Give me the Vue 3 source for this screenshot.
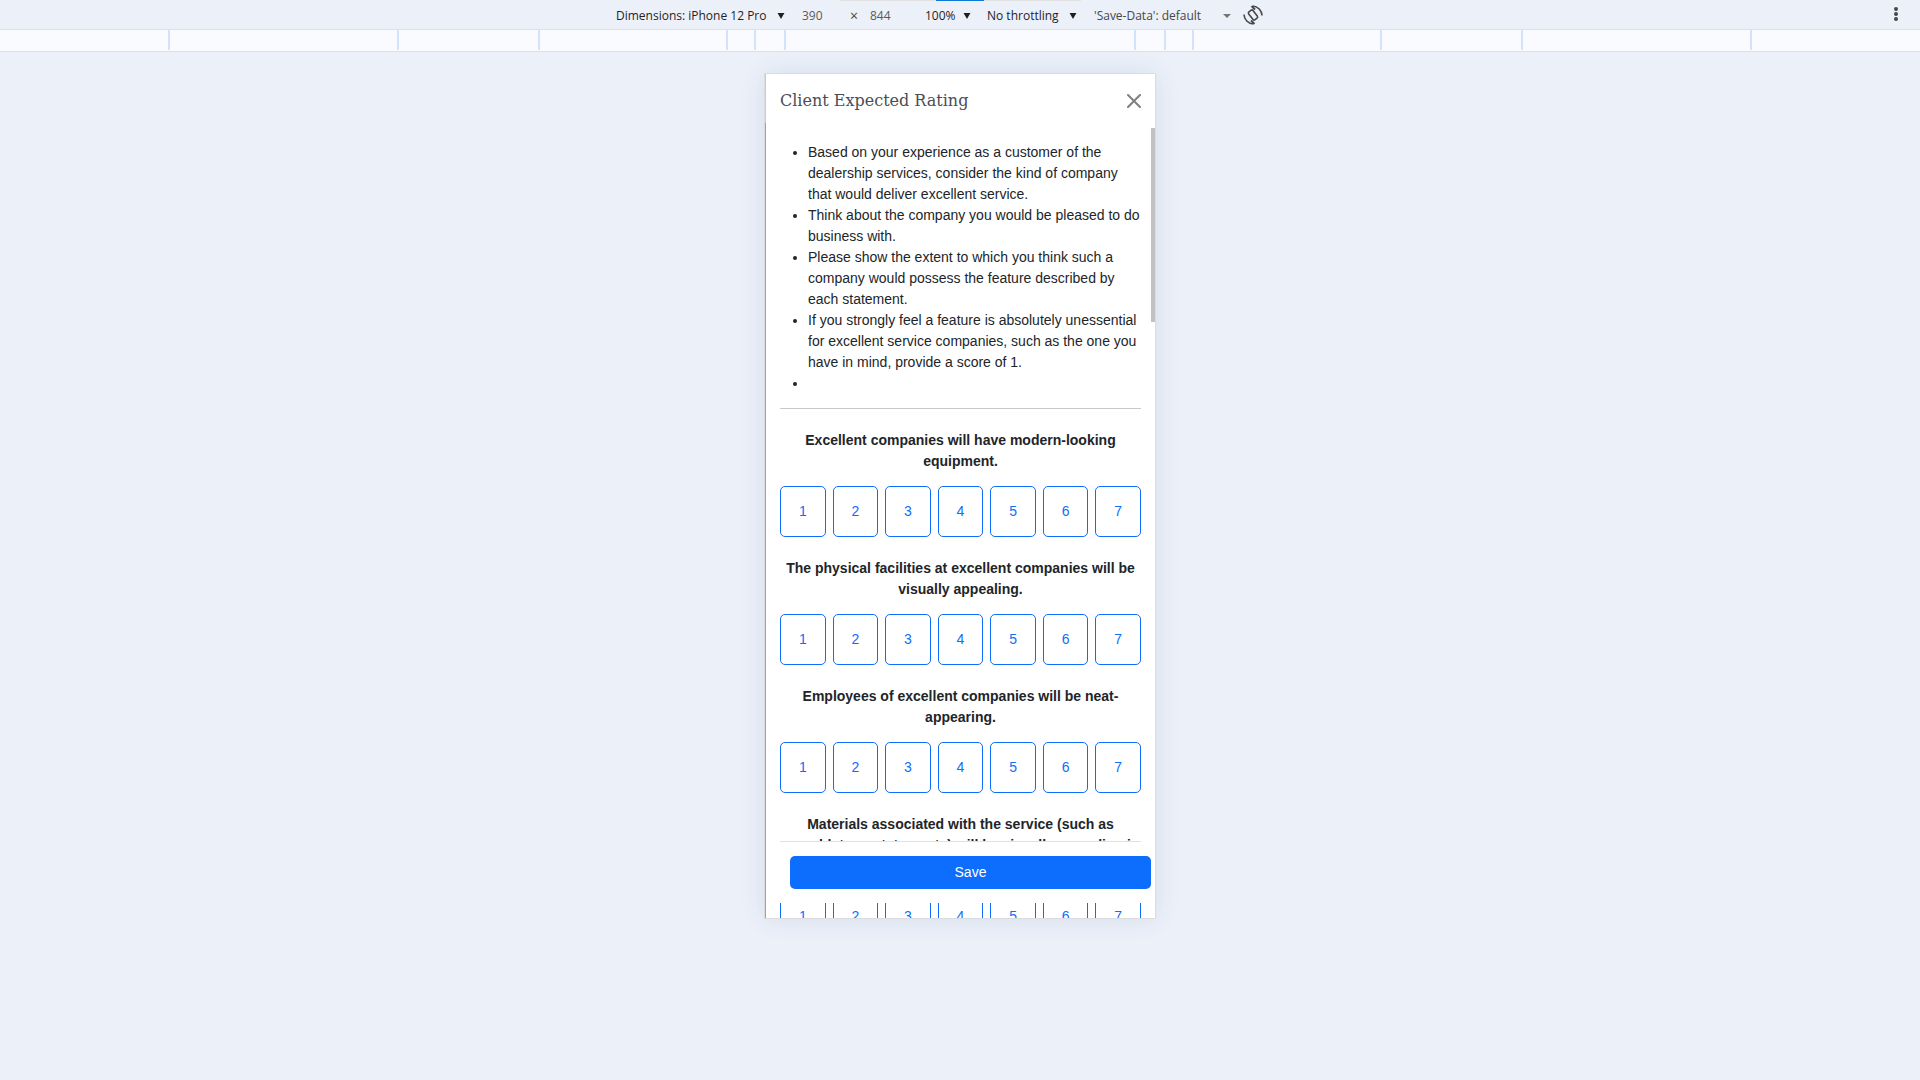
<script setup>
import { ref } from 'vue'

// Distances between ruler marks, from the outer edge inwards
const marks = [168, 227, 139, 186, 26, 28]
const device = ref('Dimensions: iPhone 12 Pro')
const answers = ref({})

const instructions = [
  'Based on your experience as a customer of the dealership services, consider the kind of company that would deliver excellent service.',
  'Think about the company you would be pleased to do business with.',
  'Please show the extent to which you think such a company would possess the feature described by each statement.',
  'If you strongly feel a feature is absolutely unessential for excellent service companies, such as the one you have in mind, provide a score of 1.',
  '',
]

const questions = [
  'Excellent companies will have modern-looking equipment.',
  'The physical facilities at excellent companies will be visually appealing.',
  'Employees of excellent companies will be neat-appearing.',
  'Materials associated with the service (such as pamphlets or statements) will be visually appealing in an excellent company.',
]
</script>

<template>
  <div class="page">
    <header class="toolbar">
      <div class="loadbar"><span></span></div>
      <div class="controls">
        <label class="pick device">
          <select v-model="device" aria-label="Device"><option>Dimensions: iPhone 12 Pro</option></select>
          <svg viewBox="0 0 8 7"><path d="M0 0h8L4 7z" /></svg>
        </label>
        <input class="size" type="text" value="390" aria-label="Width" />
        <span class="times">×</span>
        <input class="size" type="text" value="844" aria-label="Height" />
        <label class="pick zoom">
          <select aria-label="Zoom"><option>100%</option></select>
          <svg viewBox="0 0 8 7"><path d="M0 0h8L4 7z" /></svg>
        </label>
        <label class="pick throttle">
          <select aria-label="Throttling"><option>No throttling</option></select>
          <svg viewBox="0 0 8 7"><path d="M0 0h8L4 7z" /></svg>
        </label>
        <label class="pick save-data">
          <select aria-label="Save-Data"><option>'Save-Data': default</option></select>
          <svg viewBox="0 0 8 4"><path d="M0 0h8L4 4z" /></svg>
        </label>
        <button class="icon" aria-label="Rotate">
          <svg viewBox="0 0 20 20" fill="none" stroke="#474747" stroke-width="1.6">
            <rect x="7.3" y="5" width="5.4" height="10" rx="1.5" transform="rotate(-38 10 10)" />
            <path d="M1 9.5C1.2 14.5 5 18.7 10.5 19M19 10.5C18.8 5.5 15 1.3 9.5 1" />
            <path d="M8 15.5l3.5 3.4M12 4.5L8.5 1.1" stroke-width="2" />
          </svg>
        </button>
      </div>
      <button class="more" aria-label="More options">
        <svg viewBox="0 0 4 14" fill="#474747"><circle cx="2" cy="2" r="2" /><circle cx="2" cy="7" r="2" /><circle cx="2" cy="12" r="2" /></svg>
      </button>
    </header>

    <div class="ruler">
      <div class="half">
        <i v-for="(w, k) in marks" :key="k" :style="{ flexGrow: w }"></i>
        <b></b>
      </div>
      <div class="half flip">
        <i v-for="(w, k) in marks" :key="k" :style="{ flexGrow: w }"></i>
        <b></b>
      </div>
    </div>

    <main class="phone">
      <div class="title">
        <h1>Client Expected Rating</h1>
        <button class="close" aria-label="Close">
          <svg viewBox="0 0 14 14" stroke="#7f7f7f" stroke-width="2" stroke-linecap="round"><path d="M1 1l12 12M13 1L1 13" /></svg>
        </button>
      </div>
      <div class="body">
        <ul>
          <li v-for="(t, k) in instructions" :key="k">{{ t }}</li>
        </ul>
        <hr />
        <section v-for="(q, k) in questions" :key="k" class="question">
          <p>{{ q }}</p>
          <div class="scale">
            <button v-for="n in 7" :key="n" @click="answers[k] = n">{{ n }}</button>
          </div>
        </section>
        <div class="thumb"></div>
      </div>
      <div class="footer"><button>Save</button></div>
    </main>
  </div>
</template>

<style>
body { margin: 0; background: #ebf0f9; }
</style>

<style scoped>
* { box-sizing: border-box; }
.page { min-height: 100vh; background: #ebf0f9; font-family: "Liberation Sans", Arial, sans-serif; color: #212529; }
button, select, input { font: inherit; border: 0; padding: 0; margin: 0; background: none; color: inherit; }
svg { display: block; }

.toolbar { position: relative; display: flex; justify-content: center; height: 30px; border-bottom: 1px solid #d3e1fa; background: #ecf0f9; font-family: "Segoe UI", "Open Sans", sans-serif; font-size: 12px; color: #1f1f1f; }
.loadbar { position: absolute; top: 0; left: calc(50% - 120px); width: 241px; height: 1px; background: #e3e3e3; }
.loadbar span { display: block; width: 48px; height: 1px; margin-left: 96px; background: #0b78d8; }
.controls { display: flex; align-items: center; width: 688px; padding-top: 2px; }
.pick { display: flex; align-items: center; }
.pick select { appearance: none; flex: 1; min-width: 0; height: 20px; white-space: nowrap; }
.pick svg { width: 8px; height: 6px; fill: #1f1f1f; }
.device { width: 169px; margin-right: 17px; }
.size { width: 42px; color: #5a5a5a; }
.times { width: 26px; padding-left: 6px; color: #474747; font-size: 14px; }
.times + .size { width: 55px; }
.zoom { width: 46px; margin-right: 16px; }
.throttle { width: 90px; margin-right: 17px; }
.save-data { width: 137px; margin-right: 12px; color: #474747; }
.save-data svg { height: 4px; fill: #757575; }
.icon svg { width: 20px; height: 20px; margin-bottom: 2px; }
.more { position: absolute; right: 22px; top: 7px; }
.more svg { width: 4px; height: 14px; }

.ruler { display: flex; height: 22px; padding-bottom: 1px; background: #f9fbff; border-bottom: 1px solid #d3e1fa; }
.half { display: flex; flex: 1; }
.flip { flex-direction: row-reverse; }
.half i { flex-basis: 0; border-right: 2px solid #d3e3fd; }
.flip i { border-right: 0; border-left: 2px solid #d3e3fd; }
.half b { flex: 174 0 0; }

.phone { position: relative; display: flex; flex-direction: column; width: 392px; height: 846px; margin: 21px auto 0; overflow: hidden; background: #fff; border: 1px solid #dadce0; box-shadow: 0 0 24px rgba(60, 80, 120, 0.1); }
.title { display: flex; flex: none; align-items: center; justify-content: space-between; height: 49px; padding: 5px 14px 0 14px; border-left: 1px solid #c8cacd; }
h1 { margin: 0; font-family: "Roboto Slab", "DejaVu Serif", serif; font-weight: 300; font-size: 16px; line-height: 24px; color: #4a4e53; }
.close svg { width: 14px; height: 14px; }
.body { position: relative; flex: 1; min-height: 0; overflow: hidden; padding: 19px 14px 0; border-left: 1px solid #a0a0a0; font-size: 14px; line-height: 21px; }
ul { margin: 0 0 14px; padding-left: 28px; }
li { min-height: 21px; }
hr { margin: 0 0 21px; border: 0; border-top: 1px solid #c8c9ca; }
.question { margin-bottom: 21px; }
.question p { margin: 0 0 14px; text-align: center; font-weight: 700; }
.scale { display: grid; grid-template-columns: repeat(7, 1fr); gap: 7px; }
.scale button { height: 51px; border: 1px solid #0d6efd; border-radius: 5px; color: #0d6efd; }
.thumb { position: absolute; top: 5px; right: 0; width: 4px; height: 194px; background: #c1c1c1; }
.footer { position: absolute; left: 15px; right: 14px; bottom: 15px; height: 62px; padding-top: 14px; background: #fff; border-top: 1px solid #dee2e6; }
.footer button { display: block; width: 100%; height: 33px; margin-left: 10px; padding-bottom: 2px; border-radius: 5px; background: #0d6efd; color: #fff; font-size: 14px; }
</style>
